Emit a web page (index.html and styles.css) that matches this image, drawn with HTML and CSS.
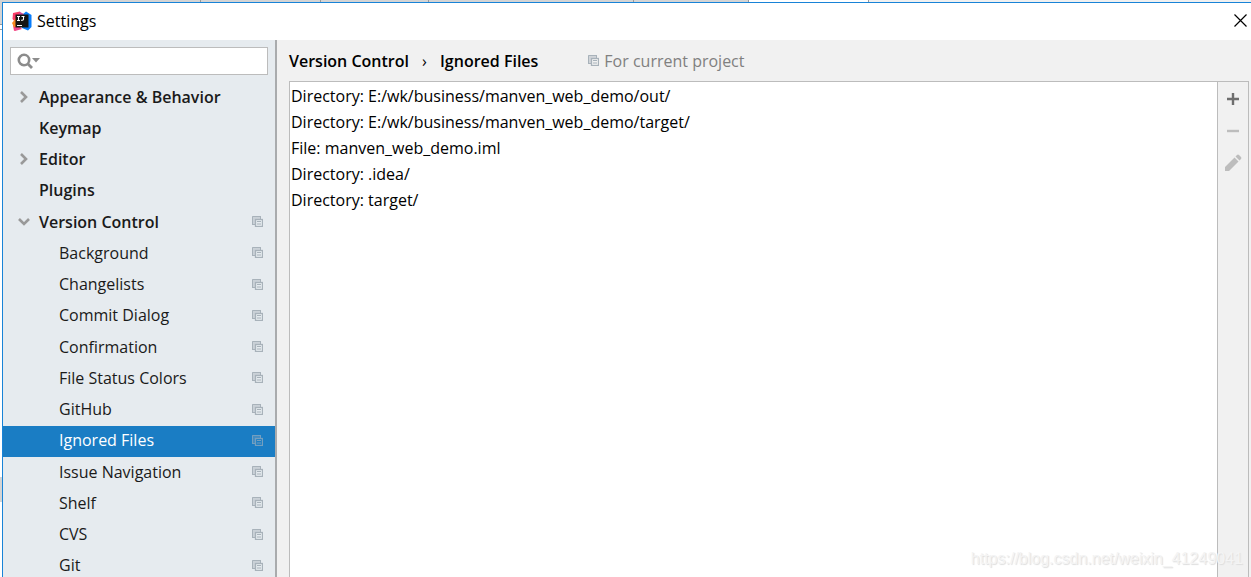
FILE: index.html
```
<!DOCTYPE html>
<html lang="en">
<head>
<meta charset="utf-8">
<title>Settings</title>
<link rel="stylesheet" href="styles.css">
</head>
<body>
<svg class="defs" width="0" height="0" aria-hidden="true">
  <symbol id="project" viewBox="0 0 11 11">
    <path d="M0 0H9V3H3V9H0Z" fill="currentColor" opacity=".45"/>
    <path d="M0.500 9V0.500H9" fill="none" stroke="currentColor"/>
    <path d="M8.500 1V3M1 8.500H3" stroke="currentColor"/>
    <rect x="3.500" y="3.500" width="7" height="7" fill="none" stroke="currentColor" stroke-width="1.300"/>
    <path d="M5 5.500H9M5 8H9" stroke="currentColor"/>
  </symbol>
  <symbol id="right" viewBox="0 0 12 12"><path d="M3 1L8 6L3 11" fill="none" stroke="currentColor" stroke-width="2.600"/></symbol>
  <symbol id="down" viewBox="0 0 12 12"><path d="M1 3L6 8L11 3" fill="none" stroke="currentColor" stroke-width="2.600"/></symbol>
</svg>
<div class="desktop">
  <div class="backdrop" aria-hidden="true"><i class="tab tab-a"></i><i class="tab tab-b"></i><i class="tab tab-c"></i><i class="tab tab-d"></i><i class="tab tab-e"></i><i class="tab tab-f"></i><i class="tab tab-open"></i></div>
  <div class="edge" aria-hidden="true"><i class="edge-top"></i><i class="edge-line"></i><i class="edge-gap"></i><i class="edge-line"></i><i class="edge-page"></i><i class="edge-mark"></i></div>
  <div class="window">
    <header class="titlebar">
      <svg class="logo" width="20" height="20" viewBox="0 0 20 20" aria-hidden="true">
        <path d="M1 2L8 .500L10 6L6 18L2 20L1 14L3 11L.500 8Z" fill="#fb3d68"/>
        <path d="M0 12L4 7L5 16L2 16Z" fill="#fb8a20"/>
        <path d="M10 4L14 .500L19.500 4V16L16 19.500L10 17Z" fill="#087cfa"/>
        <path d="M8 1L12 3L10 6L6 4Z" fill="#d04d9d"/>
        <path d="M2 17L7 15L10 18L3 20Z" fill="#ef478d"/>
        <path d="M3.500 3.500H16.500V16.500H3.500Z" fill="#141414"/>
        <path d="M5 5.500H8M6.500 5.500V9.500M5 9.500H8M9.500 5.500H12.500M11.500 5V8Q11.500 9.500 9 9.300M5 14.500H10" fill="none" stroke="#fff" stroke-width="1.100"/>
      </svg>
      <h1 class="title">Settings</h1>
      <button class="close" aria-label="Close"><svg width="13" height="13" viewBox="0 0 13 13"><path d="M.500 .500L12.500 12.500M12.500 .500L.500 12.500" stroke="#000" stroke-width="1.200"/></svg></button>
    </header>
    <div class="content">
      <aside class="sidebar">
        <label class="search">
          <svg width="24" height="16" viewBox="0 0 24 16" aria-hidden="true"><circle cx="7" cy="7" r="5.200" fill="none" stroke="#8c8c8c" stroke-width="2.600"/><path d="M10.500 10.500L15 15" stroke="#8c8c8c" stroke-width="2.800"/><path d="M15 5H23L19 9.500Z" fill="#8c8c8c"/></svg>
          <input type="search" aria-label="Search settings">
        </label>
        <nav class="tree">
          <button class="row group"><svg class="arrow"><use href="#right"/></svg>Appearance &amp; Behavior</button>
          <button class="row group"><span class="arrow"></span>Keymap</button>
          <button class="row group"><svg class="arrow"><use href="#right"/></svg>Editor</button>
          <button class="row group"><span class="arrow"></span>Plugins</button>
          <button class="row group" aria-expanded="true"><svg class="arrow"><use href="#down"/></svg>Version Control<svg class="scope"><use href="#project"/></svg></button>
          <button class="row child">Background<svg class="scope"><use href="#project"/></svg></button>
          <button class="row child">Changelists<svg class="scope"><use href="#project"/></svg></button>
          <button class="row child">Commit Dialog<svg class="scope"><use href="#project"/></svg></button>
          <button class="row child">Confirmation<svg class="scope"><use href="#project"/></svg></button>
          <button class="row child">File Status Colors<svg class="scope"><use href="#project"/></svg></button>
          <button class="row child">GitHub<svg class="scope"><use href="#project"/></svg></button>
          <button class="row child selected" aria-current="page">Ignored Files<svg class="scope"><use href="#project"/></svg></button>
          <button class="row child">Issue Navigation<svg class="scope"><use href="#project"/></svg></button>
          <button class="row child">Shelf<svg class="scope"><use href="#project"/></svg></button>
          <button class="row child">CVS<svg class="scope"><use href="#project"/></svg></button>
          <button class="row child">Git<svg class="scope"><use href="#project"/></svg></button>
        </nav>
      </aside>
      <main class="panel">
        <div class="crumbs">
          <span class="crumb">Version Control</span>
          <span class="separator">›</span>
          <span class="crumb">Ignored Files</span>
          <span class="note"><svg class="scope"><use href="#project"/></svg>For current project</span>
        </div>
        <div class="editor">
          <ul class="files">
            <li>Directory: E:/wk/business/manven_web_demo/out/</li>
            <li>Directory: E:/wk/business/manven_web_demo/target/</li>
            <li>File: manven_web_demo.iml</li>
            <li>Directory: .idea/</li>
            <li>Directory: target/</li>
          </ul>
          <div class="tools">
            <button class="tool" aria-label="Add"><svg width="18" height="18" viewBox="0 0 18 18"><path d="M3 9H15M9 3V15" stroke="#6e6e6e" stroke-width="2.400"/></svg></button>
            <button class="tool" aria-label="Remove"><svg width="18" height="18" viewBox="0 0 18 18"><path d="M3 9H15" stroke="#bdbdbd" stroke-width="2.400"/></svg></button>
            <button class="tool" aria-label="Edit"><svg width="18" height="18" viewBox="0 0 18 18"><path d="M1 13L10.500 3.500L14.500 7.500L5 17H1ZM11.500 2.500L13 1Q14 .200 15 1L17 3Q17.800 4 17 5L15.500 6.500Z" fill="#bdbdbd"/></svg></button>
          </div>
        </div>
      </main>
    </div>
  </div>
  <div class="watermark">https://blog.csdn.net/weixin_41249041</div>
</div>
</body>
</html>
```
FILE: styles.css
```
* { box-sizing: border-box; }
body { margin: 0; font: 16px/26px "Open Sans", "Noto Sans", sans-serif; color: #000; }
button { border: 0; padding: 0; background: none; font: inherit; color: inherit; text-align: left; }
svg { flex: none; display: block; }
.defs { position: absolute; }

.desktop { position: relative; display: grid; grid-template: 2px 1fr / 2px 1fr; height: 100vh; overflow: hidden; background: #fff; }
.backdrop { grid-column: 1 / 3; display: flex; background: #f0f0f0; }
.tab { background: #d4d4d4; border-right: 1px solid #999; }
.tab-a { width: 201px; }
.tab-b { width: 120px; }
.tab-c { width: 108px; }
.tab-d { width: 100px; border-right-color: #d4d4d4; }
.tab-e { width: 105px; }
.tab-f { width: 115px; }
.tab-open { width: 120px; background: #fff; }
.edge { display: flex; flex-direction: column; }
.edge-top { height: 22px; background: #d4d4d4; }
.edge-line { height: 1px; background: #999; }
.edge-gap { height: 4px; }
.edge-page { flex: 1; }
.edge-mark { height: 25px; margin-bottom: 75px; background: #d4d4d4; }

.window { display: flex; flex-direction: column; min-height: 0; border: solid #1883d7; border-width: 1px 0 0 1px; background: #f1f1f1; }
.titlebar { display: flex; align-items: center; flex: none; height: 37px; padding: 0 4px 2px 9px; background: #fff; }
.title { margin: 0 auto 0 5px; font-size: 16px; font-weight: 400; }
.content { display: flex; flex: 1; min-height: 0; }

.sidebar { flex: none; width: 274px; border-right: 2px solid #a9abad; background: #e6ebef; overflow: hidden; }
.search { display: flex; align-items: center; height: 28px; margin: 7px 7px; padding-left: 6px; border: 1px solid #bcbcbc; background: #fff; }
.search input { flex: 1; min-width: 0; border: 0; outline: 0; background: none; font: inherit; }
.tree { display: grid; grid-auto-rows: 1fr; height: 500px; color: #1a1a1a; }
.row { display: flex; align-items: center; width: 100%; padding: 0 12px 2px 0; }
.group { padding-left: 15px; font-weight: 600; }
.child { padding-left: 56px; }
.selected { background: #1a7dc4; color: #fff; }
.arrow { width: 12px; height: 12px; margin-right: 9px; color: #999; }
.scope { width: 11px; height: 11px; margin-left: auto; color: #a8b2ba; }
.selected .scope { color: #739fc0; }

.panel { display: flex; flex: 1; flex-direction: column; min-width: 0; padding: 0 2px 0 12px; }
.crumbs { display: flex; align-items: center; flex: none; height: 41px; }
.crumb { font-weight: 600; }
.separator { width: 31px; text-align: center; }
.note { display: flex; align-items: center; gap: 5px; margin-left: 50px; color: #808080; }
.editor { display: flex; flex: 1; border: solid #bcbcbc; border-width: 1px 1px 0; }
.files { flex: 1; margin: 0; padding: 1px; list-style: none; background: #fff; }
.tools { display: flex; flex-direction: column; gap: 14px; width: 31px; padding-top: 8px; border-left: 1px solid #bcbcbc; }
.tool { display: flex; justify-content: center; }
.watermark { position: absolute; right: 8px; bottom: 6px; font: 16px/24px "Liberation Sans", sans-serif; color: #f4f4f4; text-shadow: 1px 1px 1px #ddd; }
```
